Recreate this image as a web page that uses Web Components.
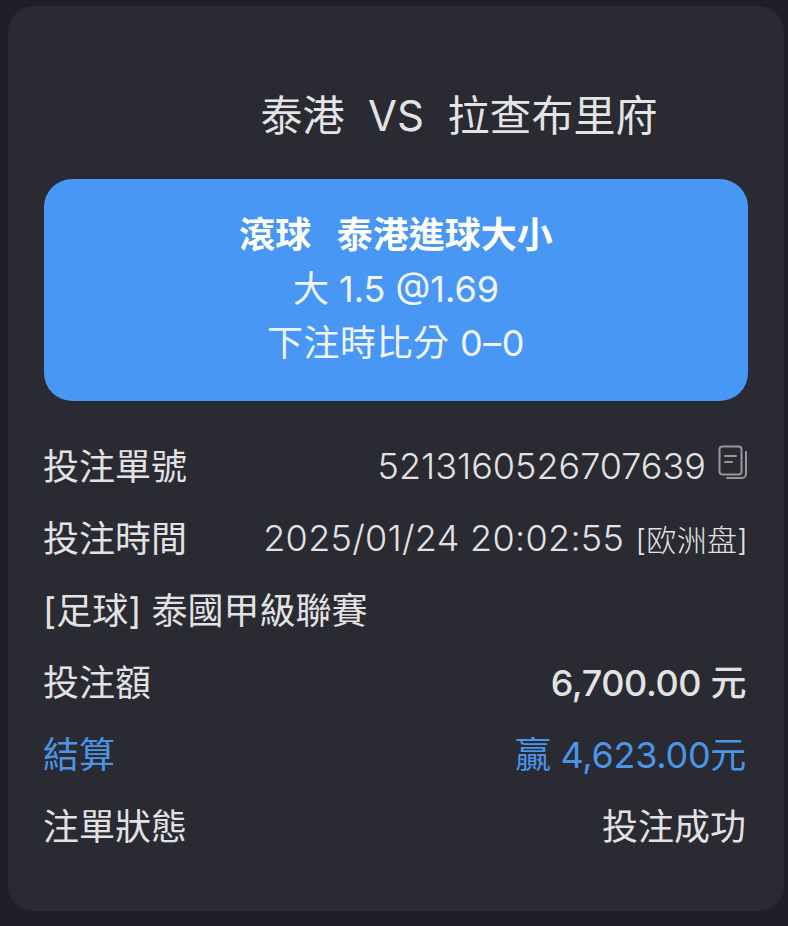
<!DOCTYPE html>
<html lang="zh-Hant">
<head>
<meta charset="utf-8">
<title>注單詳情</title>
<style>
  html, body { margin: 0; padding: 0; background: #1f1f27; }
  body { font-family: Inter, 'Noto Sans CJK TC', sans-serif; }
</style>
</head>
<body>
<bet-card>
  <bet-title>泰港&nbsp; VS &nbsp;拉查布里府</bet-title>
  <bet-banner>
    <strong>滾球 &nbsp; 泰港進球大小</strong>
    <span>大 1.5 @1.69</span>
    <span style="letter-spacing:.5px">下注時比分 0–0</span>
  </bet-banner>
  <bet-row>
    <span slot="label">投注單號</span>
    <span style="font-weight:300;padding-top:4px">5213160526707639</span><copy-icon></copy-icon>
  </bet-row>
  <bet-row>
    <span slot="label">投注時間</span>
    <span style="font-weight:300;padding-top:4px;letter-spacing:.3px">2025/01/24 20:02:55 <small style="font-size:30px;letter-spacing:.3px;margin-left:1px">[欧洲盘]</small></span>
  </bet-row>
  <bet-row>
    <span slot="label">[足球]&nbsp;泰國甲級聯賽</span>
  </bet-row>
  <bet-row>
    <span slot="label">投注額</span>
    <b style="font-weight:500;letter-spacing:-.4px;margin-right:2px">6,700.00 元</b>
  </bet-row>
  <bet-row accent>
    <span slot="label">結算</span>
    <span style="letter-spacing:-.3px;margin-right:2px">贏 4,623.00元</span>
  </bet-row>
  <bet-row>
    <span slot="label">注單狀態</span>
    <span style="margin-right:2px">投注成功</span>
  </bet-row>
</bet-card>
<script>
  class BetCard extends HTMLElement {
    constructor() {
      super();
      this.attachShadow( {mode: 'open'} ).innerHTML = `
        <style>
          :host {
            background: #2a2a32;
            border-radius: 26px;
            box-sizing: border-box;
            display: block;
            height: 905px;
            margin: 6px 4px 0 8px;
            padding: 0 36px;
            width: 776px;
          }
        </style>
        <slot></slot>
      `;
    }
  }

  class BetTitle extends HTMLElement {
    constructor() {
      super();
      this.attachShadow( {mode: 'open'} ).innerHTML = `
        <style>
          :host {
            color: #e4e4e4;
            display: block;
            font-size: 42px;
            font-weight: 400;
            line-height: 60px;
            padding: 80px 0 33px 126px;
            text-align: center;
            white-space: nowrap;
          }
        </style>
        <slot></slot>
      `;
    }
  }

  class BetBanner extends HTMLElement {
    constructor() {
      super();
      this.attachShadow( {mode: 'open'} ).innerHTML = `
        <style>
          :host {
            align-items: center;
            background: #4897f5;
            border-radius: 28px;
            box-sizing: border-box;
            color: #f0f6fe;
            display: flex;
            flex-direction: column;
            font-size: 36px;
            height: 222px;
            justify-content: center;
            line-height: 54px;
            margin-bottom: 27px;
            padding-bottom: 3px;
          }
          ::slotted(strong) { color: #fff; font-weight: 700; }
          ::slotted(span) { font-weight: 400; }
        </style>
        <slot></slot>
      `;
    }
  }

  class BetRow extends HTMLElement {
    constructor() {
      super();
      this.attachShadow( {mode: 'open'} ).innerHTML = `
        <style>
          :host {
            align-items: center;
            color: #e2e2e2;
            display: flex;
            font-size: 36px;
            font-weight: 400;
            height: 72px;
            justify-content: space-between;
            margin-left: -1px;
            white-space: nowrap;
          }
          :host([accent]) { color: #4b94e6; }
          .value { align-items: center; display: flex; gap: 12px; }
        </style>
        <slot name="label"></slot>
        <div class="value"><slot></slot></div>
      `;
    }
  }

  class CopyIcon extends HTMLElement {
    constructor() {
      super();
      this.attachShadow( {mode: 'open'} ).innerHTML = `
        <style>
          :host { display: block; height: 34px; margin-top: -4px; width: 30px; }
          svg { display: block; }
        </style>
        <svg width="30" height="34" viewBox="0 0 30 34" fill="none" stroke="#96969c" stroke-width="2" stroke-linecap="round">
          <rect x="1.5" y="1.5" width="22" height="28" rx="3"></rect>
          <path d="M7 11h11M7 17h7"></path>
          <path d="M28 7v22a4 4 0 0 1-4 4H9"></path>
        </svg>
      `;
    }
  }

  window.customElements.define( 'bet-card', BetCard );
  window.customElements.define( 'bet-title', BetTitle );
  window.customElements.define( 'bet-banner', BetBanner );
  window.customElements.define( 'bet-row', BetRow );
  window.customElements.define( 'copy-icon', CopyIcon );
</script>
</body>
</html>
